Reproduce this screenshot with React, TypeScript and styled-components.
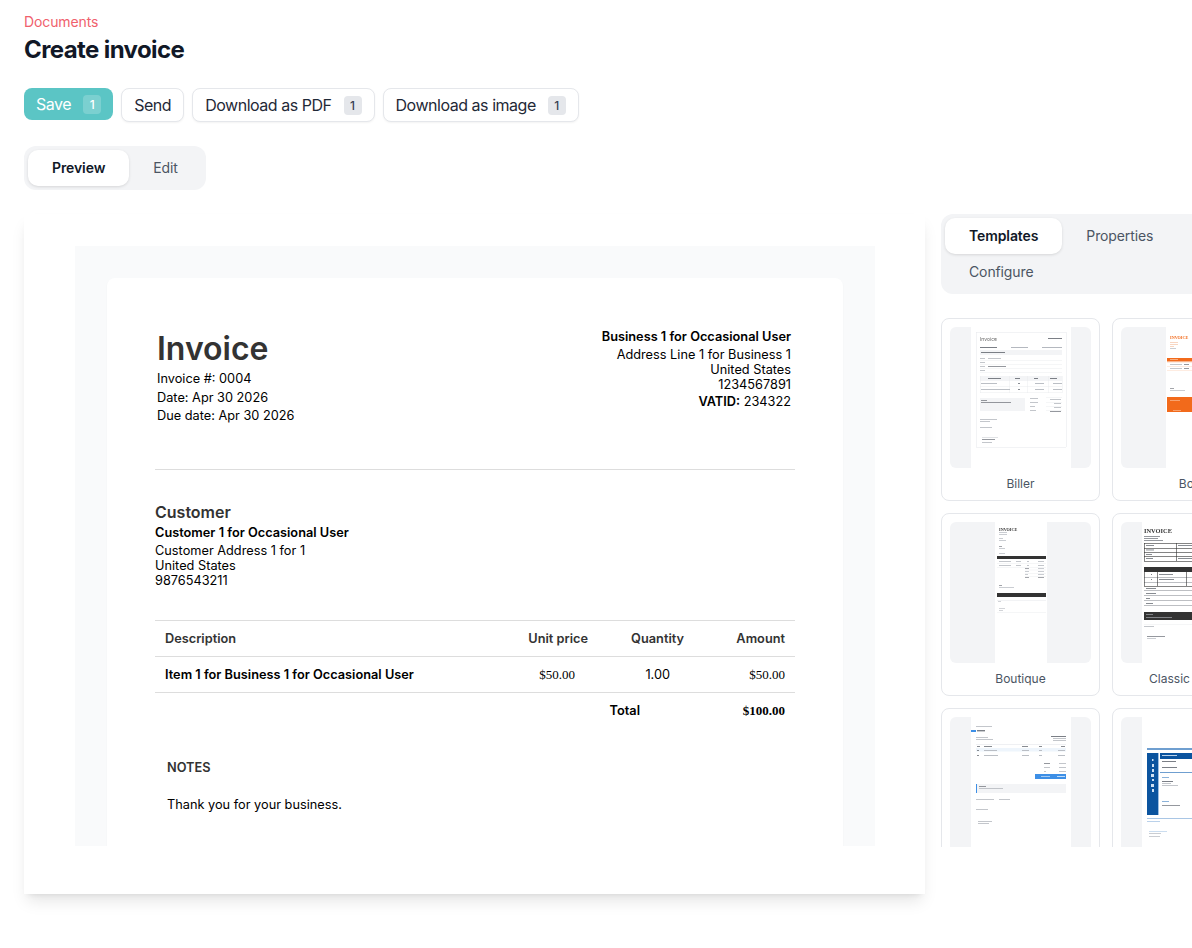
import styled, { createGlobalStyle } from 'styled-components';

type Shape = [number, number, number, number, string];
type Label = { x: number; y: number; size: number; color: string; text: string; serif?: boolean };

type Template = {
	name?: string;
	nameInset?: number;
	pageX: number;
	pageWidth: number;
	shapes: Shape[];
	labels?: Label[];
};

const G1 = '#e5e7eb';
const G2 = '#b4b8bf';
const G3 = '#7b7f86';
const ORANGE = '#f26a1b';
const BLUE = '#3d8fe6';
const NAVY = '#0b549f';
const DARK = '#333333';

const templates: Template[] = [
	{
		name: 'Biller',
		pageX: 21,
		pageWidth: 100,
		labels: [{ x: 30, y: 14, size: 5, color: '#666', text: 'Invoice' }],
		shapes: [
			[26, 5, 90, 0.5, G1], [26, 120, 90, 0.5, G1], [26, 5, 0.5, 115, G1], [116, 5, 0.5, 115, G1],
			[98, 11, 14, 1, G3],
			[30, 20, 17, 1, G3], [61, 20, 17, 1, G2], [92, 20, 20, 1, G2],
			[30, 23, 82, 5, '#f3f4f6'], [31, 25, 24, 1, G3],
			[30, 31, 5, 0.8, G2], [38, 31, 13, 0.8, G2], [30, 33, 82, 0.4, G1],
			[30, 35, 5, 0.8, G2], [30, 37, 82, 0.4, G1],
			[30, 39, 5, 0.8, G2], [38, 39, 18, 0.8, G3], [30, 41, 82, 0.4, G1],
			[30, 43, 5, 0.8, G2], [30, 45, 82, 0.4, G1],
			[30, 49, 82, 5, '#f3f4f6'], [38, 51, 13, 1, G3], [65, 51, 5, 1, G3], [84, 51, 4, 1, G3], [100, 51, 7, 1, G3],
			[30, 59, 82, 0.4, G1], [30, 65.5, 82, 0.4, G1], [30, 49, 0.4, 17, G1], [59, 49, 0.4, 17, G1], [77, 49, 0.4, 17, G1], [98, 49, 0.4, 17, G1], [112, 49, 0.4, 17, G1],
			[31, 56, 16, 0.9, G2], [68, 56, 2, 0.9, G3], [85, 56, 9, 0.9, G2], [103, 56, 9, 0.9, G2],
			[31, 62, 29, 0.9, G2], [68, 62, 2, 0.9, G3], [85, 62, 9, 0.9, G2], [103, 62, 9, 0.9, G2],
			[30, 71, 45, 13, '#f3f4f6'], [31, 73, 6, 0.8, G3], [31, 75, 30, 0.8, G3],
			[80, 71, 8, 0.8, G2], [96, 70, 16, 0.4, G1], [100, 72, 11, 0.8, G2],
			[80, 75, 8, 0.8, G2], [96, 75, 16, 0.4, G1], [104, 76, 7, 0.8, G2],
			[80, 79, 5, 0.8, G2], [96, 79, 16, 0.4, G1], [104, 80, 7, 0.8, G2],
			[80, 83, 6, 0.8, G2], [96, 83, 16, 0.4, G1], [100, 84, 11, 0.8, G3],
			[30, 92, 17, 0.8, G2], [30, 94, 10, 0.8, G2],
			[30, 100, 12, 0.8, G2], [32, 110, 16, 0.4, G2], [32, 112, 13, 0.8, G3], [32, 115, 10, 0.8, G2],
		],
	},
	{
		name: 'Bold',
		pageX: 45,
		pageWidth: 52,
		labels: [{ x: 49, y: 11.5, size: 4.2, color: ORANGE, text: 'INVOICE', serif: true }],
		shapes: [
			[49, 15, 8, 0.7, '#f5c5a8'], [49, 17, 8, 0.7, '#f5c5a8'], [49, 19, 4, 0.7, '#f5c5a8'], [49, 21, 6, 0.7, G2],
			[46, 31, 51, 3.5, ORANGE], [49, 32, 8, 0.7, '#fbc9a8'],
			[46, 35, 51, 0.5, '#fcd9c2'], [49, 37, 12, 0.8, G2], [63, 37, 5, 0.8, G3],
			[46, 39, 51, 0.5, '#fcd9c2'], [49, 41, 12, 0.8, G2], [63, 41, 5, 0.8, G3],
			[46, 43, 51, 0.5, '#fcd9c2'],
			[49, 61, 4, 0.7, G3], [49, 63, 15, 0.7, G2],
			[46, 70, 51, 15, ORANGE], [49, 73, 10, 0.6, '#fbc9a8'], [52, 83, 8, 0.6, '#fbc9a8'],
		],
	},
	{
		name: 'Boutique',
		pageX: 45,
		pageWidth: 52,
		labels: [{ x: 49, y: 8.5, size: 4.2, color: DARK, text: 'INVOICE', serif: true }],
		shapes: [
			[49, 10, 8, 0.7, G2], [49, 12, 8, 0.7, G2], [49, 16, 4, 0.7, G2], [49, 18, 7, 0.7, G2],
			[49, 24, 3, 0.7, G3], [49, 26, 6, 0.7, G2], [49, 31, 6, 0.7, G2],
			[47, 34, 49, 3, DARK],
			[49, 39, 12, 0.8, G2], [66, 39, 5, 0.8, G2], [77, 39, 2, 0.8, G2], [88, 39, 6, 0.8, G2], [47, 41, 49, 0.4, G1],
			[49, 43, 12, 0.8, G2], [66, 43, 5, 0.8, G2], [77, 43, 2, 0.8, G2], [88, 43, 6, 0.8, G2], [47, 45, 49, 0.4, G1],
			[75, 46, 4, 0.7, G3], [88, 46, 6, 0.7, G2], [75, 47.8, 21, 0.4, G1],
			[75, 49, 4, 0.7, G2], [88, 49, 6, 0.7, G2], [75, 51, 21, 0.4, G1],
			[75, 52, 3, 0.7, G2], [88, 52, 6, 0.7, G2], [75, 54, 21, 0.4, G1],
			[75, 55, 4, 0.7, G3], [88, 55, 6, 0.7, G3],
			[49, 63, 3, 0.7, G3], [49, 65, 15, 0.7, G2],
			[47, 71, 49, 4, DARK], [47, 78, 49, 0.5, G1], [47, 90, 49, 0.4, G1],
			[48, 79, 3, 0.6, G2], [49, 86, 6, 0.6, G2], [49, 88, 4, 0.6, G2],
		],
	},
	{
		name: 'Classic',
		nameInset: 44,
		pageX: 21,
		pageWidth: 100,
		labels: [{ x: 23, y: 11, size: 6.4, color: DARK, text: 'INVOICE', serif: true }],
		shapes: [
			[23, 14, 16, 0.8, G3], [23, 16, 14, 0.8, G3], [23, 18, 19, 0.8, G3],
			[23, 21, 97, 0.6, DARK], [23, 26, 97, 0.6, DARK], [23, 30, 97, 0.6, DARK], [23, 34, 97, 0.6, DARK], [23, 39, 97, 0.6, DARK],
			[23, 21, 0.6, 18, DARK], [55, 21, 0.6, 18, DARK],
			[25, 23, 8, 0.9, G3], [57, 23, 20, 0.9, G3], [25, 27.5, 8, 0.9, G3], [25, 32, 6, 0.9, G3], [25, 36, 7, 0.9, G3], [57, 36, 18, 0.9, G3],
			[23, 45, 97, 5, DARK],
			[23, 55, 97, 0.5, G3], [23, 60, 97, 0.5, G3], [23, 64, 97, 0.6, DARK],
			[23, 50, 0.6, 14, DARK], [36, 50, 0.6, 14, DARK], [65, 50, 0.6, 14, DARK],
			[30, 52, 1, 1, G3], [38, 52, 14, 0.9, G3], [30, 57, 1, 1, G3], [38, 57, 15, 0.9, G3],
			[25, 66, 10, 0.9, G3], [23, 68, 97, 0.5, G3], [25, 71, 10, 0.9, G3], [23, 73, 97, 0.5, G3],
			[25, 76, 4, 0.9, G3], [23, 78, 97, 0.5, G3], [25, 81, 7, 0.9, G3], [23, 83, 97, 0.5, G3],
			[23, 90, 97, 8, DARK], [25, 92, 7, 0.6, G2], [25, 95, 26, 0.6, G2],
			[23, 102, 60, 0.4, G1], [23, 104, 10, 0.8, G2], [26, 114, 18, 0.8, G3], [26, 116, 9, 0.7, G2],
		],
	},
	{
		pageX: 21,
		pageWidth: 100,
		shapes: [
			[26, 9, 16, 0.8, G2], [21, 13, 5, 2, BLUE], [27, 13, 8, 1.4, G3],
			[26, 20, 12, 0.8, G2], [26, 22, 17, 0.8, G2], [101, 19, 15, 1, G3], [103, 21, 13, 0.8, G2], [103, 23, 13, 0.8, G2],
			[26, 27, 90, 0.6, G1], [27, 29, 3, 0.9, G3], [34, 29, 8, 0.9, G3], [72, 29, 6, 0.9, G3], [89, 29, 3, 0.9, G3], [111, 29, 4, 0.9, G3],
			[26, 31, 90, 3.5, '#eef5fc'], [27, 33, 2, 0.9, G3], [34, 33, 13, 0.9, G2], [72, 33, 7, 0.9, G2], [89, 33, 3, 0.9, G2], [108, 33, 7, 0.9, G2],
			[27, 38, 2, 0.9, G3], [34, 38, 14, 0.9, G2], [72, 38, 7, 0.9, G2], [89, 38, 3, 0.9, G2], [108, 38, 7, 0.9, G2],
			[94, 46, 6, 0.8, G3], [109, 46, 7, 0.8, G2], [94, 50, 6, 0.8, G2], [109, 50, 7, 0.8, G2], [94, 54, 2, 0.8, G2], [109, 54, 7, 0.8, G2],
			[85, 57, 31, 5, BLUE], [91, 59, 9, 0.8, '#bcd9f7'], [107, 59, 8, 0.8, '#e3f0fd'],
			[26, 67, 90, 9, '#f3f4f6'], [26, 67, 1, 9, BLUE], [29, 69, 7, 0.8, G3], [29, 71, 24, 0.8, G2],
			[26, 82, 18, 0.8, G2], [49, 82, 11, 0.8, G2], [26, 92, 12, 0.8, G2],
			[28, 104, 14, 0.8, G2], [28, 106, 11, 0.8, G2],
		],
	},
	{
		pageX: 21,
		pageWidth: 100,
		shapes: [
			[26, 31, 94, 2, '#6f9fd0'],
			[26, 36, 11, 62, NAVY], [37, 36, 1, 62, '#9dbfe2'], [31, 42, 1.5, 2, '#cfe0f2'], [31, 47, 2, 3, '#cfe0f2'], [31, 52, 2, 3, '#cfe0f2'], [30, 57, 3, 3, '#cfe0f2'], [31, 62, 2, 2, '#cfe0f2'], [30, 67, 3, 3, '#cfe0f2'], [31, 72, 2, 3, '#cfe0f2'],
			[39, 36, 81, 6, NAVY], [41, 38, 15, 1, '#b9d2ec'],
			[41, 44, 14, 1, G3], [41, 50, 15, 1, G3], [39, 55, 81, 1, '#6f9fd0'],
			[41, 60, 7, 0.8, '#6f9fd0'], [41, 64, 11, 1, G3], [41, 66, 9, 0.8, G2], [41, 68, 16, 0.8, G2],
			[41, 84, 7, 0.8, '#6f9fd0'], [41, 88, 18, 0.8, G3],
			[26, 101, 94, 1, '#a9c6e5'], [26, 104, 13, 0.8, '#a9c6e5'], [28, 114, 18, 0.6, '#a9c6e5'], [28, 116, 12, 0.7, G2], [28, 119, 11, 0.7, G2],
		],
	},
];

const GlobalStyle = createGlobalStyle`
	* {
		box-sizing: border-box;
	}

	html,
	body {
		margin: 0;
		height: 948px;
		overflow: hidden;
		background: #ffffff;
		font-family: Inter, 'Noto Sans', sans-serif;
	}
`;

const Page = styled.div`
	width: 1192px;
	height: 948px;
	padding: 14px 0 0 24px;
	overflow: hidden;
`;

const Breadcrumb = styled.div`
	font-size: 14px;
	line-height: 16px;
	letter-spacing: -0.1px;
	color: #f0616d;
`;

const Title = styled.h1`
	margin: 3px 0 0;
	padding-top: 1px;
	font-size: 24px;
	line-height: 32px;
	font-weight: 700;
	letter-spacing: -0.025em;
	color: #111827;
`;

const Toolbar = styled.div`
	display: flex;
	gap: 8px;
	margin-top: 22px;
`;

const Button = styled.button<{ $primary?: boolean }>`
	display: flex;
	align-items: center;
	gap: 12px;
	height: ${(props) => (props.$primary ? '32px' : '34px')};
	padding: 0 12px;
	font-family: inherit;
	font-size: 16px;
	letter-spacing: -0.47px;
	color: ${(props) => (props.$primary ? '#ffffff' : '#1f2937')};
	background: ${(props) => (props.$primary ? '#5bc5c5' : '#ffffff')};
	border: ${(props) => (props.$primary ? '0' : '1px solid #e5e7eb')};
	border-radius: 8px;
	box-shadow: ${(props) => (props.$primary ? 'none' : '0 1px 2px rgba(0, 0, 0, 0.05)')};
`;

const Count = styled.span<{ $primary?: boolean }>`
	display: flex;
	justify-content: center;
	align-items: center;
	width: 18px;
	height: 19px;
	font-size: 12px;
	font-weight: 500;
	letter-spacing: 0;
	color: ${(props) => (props.$primary ? '#ffffff' : '#374151')};
	background: ${(props) => (props.$primary ? 'rgba(255, 255, 255, 0.2)' : '#e5e7eb')};
	border-radius: 4px;
`;

const Tabs = styled.div<{ $wrap?: boolean }>`
	display: flex;
	flex-wrap: ${(props) => (props.$wrap ? 'wrap' : 'nowrap')};
	width: ${(props) => (props.$wrap ? '100%' : 'max-content')};
	padding: 4px;
	background: #f3f4f6;
	border-radius: 12px;
`;

const Tab = styled.div<{ $active?: boolean }>`
	display: flex;
	align-items: center;
	height: 36px;
	padding: 0 24px 1px;
	font-size: 14px;
	font-weight: ${(props) => (props.$active ? 600 : 400)};
	letter-spacing: ${(props) => (props.$active ? '-0.1px' : '-0.12px')};
	color: ${(props) => (props.$active ? '#111827' : '#4b5563')};
	background: ${(props) => (props.$active ? '#ffffff' : 'transparent')};
	border-radius: 10px;
	box-shadow: ${(props) => (props.$active ? '0 1px 3px rgba(0, 0, 0, 0.12)' : 'none')};
`;

const PreviewTabs = styled.div`
	margin-top: 24px;
`;

const Workspace = styled.div`
	display: flex;
	align-items: flex-start;
	gap: 16px;
	margin-top: 24px;
`;

const Sheet = styled.div`
	flex: none;
	width: 901px;
	padding: 32px 50px 48px 51px;
	background: #ffffff;
	box-shadow: 0 10px 15px -3px rgba(0, 0, 0, 0.1), 0 4px 6px -4px rgba(0, 0, 0, 0.1);
`;

const Backdrop = styled.div`
	height: 600px;
	padding: 32px 32px 0;
	overflow: hidden;
	background: #f9fafb;
`;

const Paper = styled.div`
	height: 640px;
	padding: 48px 48px 0;
	font-size: 12.75px;
	color: #000000;
	background: #ffffff;
	border-radius: 8px;
	box-shadow: 0 1px 2px rgba(0, 0, 0, 0.04);
`;

const PaperHeader = styled.div`
	display: flex;
	justify-content: space-between;
	height: 144px;
	margin-bottom: 32px;
	padding: 0 4px 0 2px;
	border-bottom: 1px solid #dddddd;
`;

const InvoiceTitle = styled.div`
	margin: 3px 0 1px;
	font-size: 32px;
	line-height: 40px;
	font-weight: 600;
	color: #333333;
`;

const MetaLine = styled.div`
	line-height: 18.5px;
`;

const BusinessBlock = styled.div`
	text-align: right;
	line-height: 15px;
`;

const BusinessName = styled.div`
	margin: 3px 0 3px;
	font-weight: 600;
`;

const VatLine = styled.div`
	margin-top: 2px;
`;

const Strong = styled.strong`
	font-weight: 600;
`;

const CustomerHeading = styled.div`
	font-size: 16px;
	line-height: 20px;
	font-weight: 600;
	color: #333333;
`;

const CustomerName = styled.div`
	margin: 3px 0 2px;
	line-height: 16px;
	font-weight: 600;
`;

const CustomerLine = styled.div`
	line-height: 15px;
`;

const ItemsTable = styled.table`
	width: 640px;
	margin-top: 32px;
	table-layout: fixed;
	border-collapse: collapse;
	border-top: 1px solid #dddddd;
`;

const HeadCell = styled.th<{ $align?: string; $width?: number }>`
	width: ${(props) => (props.$width ? `${props.$width}px` : 'auto')};
	height: 36px;
	padding: 0 10px;
	font-size: 12.75px;
	font-weight: 600;
	text-align: ${(props) => props.$align || 'left'};
	color: #333333;
	border-bottom: 1px solid #dddddd;
`;

const ItemCell = styled.td`
	height: 36px;
	padding: 0 10px;
	font-size: 12.75px;
	font-weight: 600;
	border-bottom: 1px solid #dddddd;
`;

const PriceCell = styled.td`
	height: 36px;
	padding: 0 23px 0 0;
	font-family: 'Liberation Serif', serif;
	font-size: 13px;
	text-align: right;
	border-bottom: 1px solid #dddddd;
`;

const AmountCell = styled.td<{ $bold?: boolean }>`
	height: 36px;
	padding: 0 10px;
	font-family: 'Liberation Serif', serif;
	font-size: 13px;
	font-weight: ${(props) => (props.$bold ? 700 : 400)};
	text-align: right;
	border-bottom: ${(props) => (props.$bold ? '0' : '1px solid #dddddd')};
`;

const QuantityCell = styled.td`
	height: 36px;
	padding: 0 24px 0 0;
	font-size: 12.75px;
	text-align: right;
	border-bottom: 1px solid #dddddd;
`;

const TotalLabel = styled.td`
	height: 36px;
	padding: 0 54px 0 0;
	font-size: 12.75px;
	font-weight: 600;
	text-align: right;
`;

const Notes = styled.div`
	margin: 31px 0 0 12px;
`;

const NotesTitle = styled.div`
	font-size: 12.75px;
	font-weight: 600;
	line-height: 16px;
	color: #333333;
`;

const NotesText = styled.div`
	margin-top: 21px;
	font-size: 12.75px;
	line-height: 16px;
`;

const SidePanel = styled.div`
	flex: none;
	width: 330px;
`;

const TemplateGrid = styled.div`
	display: grid;
	grid-template-columns: 159px 159px;
	grid-auto-rows: 183px;
	gap: 12px;
	height: 529px;
	margin-top: 24px;
	overflow: hidden;
`;

const TemplateCard = styled.div`
	display: flex;
	flex-direction: column;
	align-items: center;
	padding: 8px;
	background: #ffffff;
	border: 1px solid #e5e7eb;
	border-radius: 8px;
`;

const ThumbSvg = styled.svg`
	flex: none;
	display: block;
	width: 141px;
	height: 141px;
	border-radius: 6px;
`;

const ThumbContent = styled.g`
	filter: blur(0.3px);
`;

const TemplateName = styled.div<{ $inset?: number }>`
	margin: 8px ${(props) => props.$inset || 0}px 0 0;
	font-size: 12px;
	line-height: 16px;
	color: #4b5563;
`;

const Thumbnail = ({ template }: { template: Template }) => (
	<ThumbSvg viewBox="0 0 141 141">
		<rect width="141" height="141" fill="#f3f4f6" />
		<rect x={template.pageX} width={template.pageWidth} height="141" fill="#ffffff" />
		<ThumbContent>
			{template.shapes.map(([x, y, w, h, fill], index) => (
				<rect key={index} x={x} y={y} width={w} height={h} fill={fill} />
			))}
			{template.labels?.map((label) => (
				<text
					key={label.text}
					x={label.x}
					y={label.y}
					fontSize={label.size}
					fontWeight={label.serif ? 700 : 400}
					fontFamily={label.serif ? "'Liberation Serif', serif" : 'Inter, sans-serif'}
					fill={label.color}
				>
					{label.text}
				</text>
			))}
		</ThumbContent>
	</ThumbSvg>
);

const App = () => (
	<Page>
		<GlobalStyle />
		<Breadcrumb>Documents</Breadcrumb>
		<Title>Create invoice</Title>

		<Toolbar>
			<Button $primary>
				Save <Count $primary>1</Count>
			</Button>
			<Button>Send</Button>
			<Button>
				Download as PDF <Count>1</Count>
			</Button>
			<Button>
				Download as image <Count>1</Count>
			</Button>
		</Toolbar>

		<PreviewTabs>
			<Tabs>
				<Tab $active>Preview</Tab>
				<Tab>Edit</Tab>
			</Tabs>
		</PreviewTabs>

		<Workspace>
			<Sheet>
				<Backdrop>
					<Paper>
						<PaperHeader>
							<div>
								<InvoiceTitle>Invoice</InvoiceTitle>
								<MetaLine>Invoice #: 0004</MetaLine>
								<MetaLine>Date: Apr 30 2026</MetaLine>
								<MetaLine>Due date: Apr 30 2026</MetaLine>
							</div>
							<BusinessBlock>
								<BusinessName>Business 1 for Occasional User</BusinessName>
								<div>Address Line 1 for Business 1</div>
								<div>United States</div>
								<div>1234567891</div>
								<VatLine>
									<Strong>VATID:</Strong> 234322
								</VatLine>
							</BusinessBlock>
						</PaperHeader>

						<CustomerHeading>Customer</CustomerHeading>
						<CustomerName>Customer 1 for Occasional User</CustomerName>
						<CustomerLine>Customer Address 1 for 1</CustomerLine>
						<CustomerLine>United States</CustomerLine>
						<CustomerLine>9876543211</CustomerLine>

						<ItemsTable>
							<thead>
								<tr>
									<HeadCell>Description</HeadCell>
									<HeadCell $align="right" $width={100}>
										Unit price
									</HeadCell>
									<HeadCell $align="right" $width={96}>
										Quantity
									</HeadCell>
									<HeadCell $align="right" $width={101}>
										Amount
									</HeadCell>
								</tr>
							</thead>
							<tbody>
								<tr>
									<ItemCell>Item 1 for Business 1 for Occasional User</ItemCell>
									<PriceCell>$50.00</PriceCell>
									<QuantityCell>1.00</QuantityCell>
									<AmountCell>$50.00</AmountCell>
								</tr>
								<tr>
									<td />
									<td />
									<TotalLabel>Total</TotalLabel>
									<AmountCell $bold>$100.00</AmountCell>
								</tr>
							</tbody>
						</ItemsTable>

						<Notes>
							<NotesTitle>NOTES</NotesTitle>
							<NotesText>Thank you for your business.</NotesText>
						</Notes>
					</Paper>
				</Backdrop>
			</Sheet>

			<SidePanel>
				<Tabs $wrap>
					<Tab $active>Templates</Tab>
					<Tab>Properties</Tab>
					<Tab>Configure</Tab>
				</Tabs>
				<TemplateGrid>
					{templates.map((template, index) => (
						<TemplateCard key={index}>
							<Thumbnail template={template} />
							{template.name && <TemplateName $inset={template.nameInset}>{template.name}</TemplateName>}
						</TemplateCard>
					))}
				</TemplateGrid>
			</SidePanel>
		</Workspace>
	</Page>
);

export default App;
